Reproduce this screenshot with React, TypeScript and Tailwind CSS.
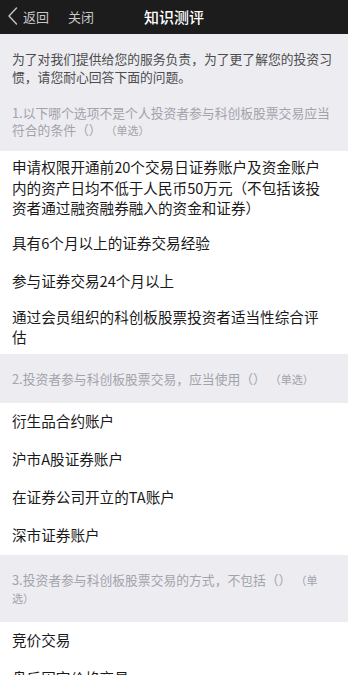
import React from "react";

type Q = { no: string; text: string; options: string[] };

const questions: Q[] = [
  {
    no: "1.",
    text: "以下哪个选项不是个人投资者参与科创板股票交易应当符合的条件（）",
    options: [
      "申请权限开通前20个交易日证券账户及资金账户内的资产日均不低于人民币50万元（不包括该投资者通过融资融券融入的资金和证券）",
      "具有6个月以上的证券交易经验",
      "参与证券交易24个月以上",
      "通过会员组织的科创板股票投资者适当性综合评估",
    ],
  },
  {
    no: "2.",
    text: "投资者参与科创板股票交易，应当使用（）",
    options: ["衍生品合约账户", "沪市A股证券账户", "在证券公司开立的TA账户", "深市证券账户"],
  },
  {
    no: "3.",
    text: "投资者参与科创板股票交易的方式，不包括（）",
    options: ["竞价交易", "盘后固定价格交易", "大宗交易", "做市商交易"],
  },
];

function QText({ q }: { q: Q }) {
  return (
    <p className="text-[12.8px] leading-[17px] text-[#a3a3ab]">
      {q.no}
      {q.text}
      <span className="ml-[4px] text-[11px]">（单选）</span>
    </p>
  );
}

function Options({ items }: { items: string[] }) {
  return (
    <div className="bg-white">
      {items.map((o) => (
        <div
          key={o}
          className="flex min-h-[38px] items-center py-[6px] pl-3 pr-[20px] text-[14.6px] leading-[20.5px] text-[#1a1a1a]"
        >
          {o}
        </div>
      ))}
    </div>
  );
}

export default function App() {
  return (
    <div className="min-h-[675px] w-full bg-white font-['Noto_Sans_CJK_SC',sans-serif] [text-spacing-trim:space-all]">
      <header className="grid h-[34px] grid-cols-[1fr_auto_1fr] items-center bg-[#1c1c1c]">
        <div className="flex items-center">
          <svg width="23" height="34" viewBox="0 0 23 34" className="shrink-0">
            <polyline
              points="16.5,8 9,16 16.5,24"
              fill="none"
              stroke="#c4c4c4"
              strokeWidth="1.4"
              strokeLinecap="round"
              strokeLinejoin="round"
            />
          </svg>
          <span className="text-[13px] text-[#c8c8c8]">返回</span>
          <span className="ml-[19px] text-[13px] text-[#c8c8c8]">关闭</span>
        </div>
        <div className="text-[15px] font-medium text-white">知识测评</div>
        <div />
      </header>

      <div className="bg-[#ececf1] pb-[12px] pl-3 pr-3 pt-[16px]">
        <p className="text-[12.8px] leading-[18px] text-[#4d4d4f]">
          为了对我们提供给您的服务负责，为了更了解您的投资习惯，请您耐心回答下面的问题。
        </p>
        <div className="mt-[18px]">
          <QText q={questions[0]} />
        </div>
      </div>
      <Options items={questions[0].options} />

      {questions.slice(1).map((q) => (
        <div key={q.no}>
          <div className="bg-[#ececf1] pb-[15px] pl-3 pr-3 pt-[16px]">
            <QText q={q} />
          </div>
          <Options items={q.options} />
        </div>
      ))}
    </div>
  );
}
